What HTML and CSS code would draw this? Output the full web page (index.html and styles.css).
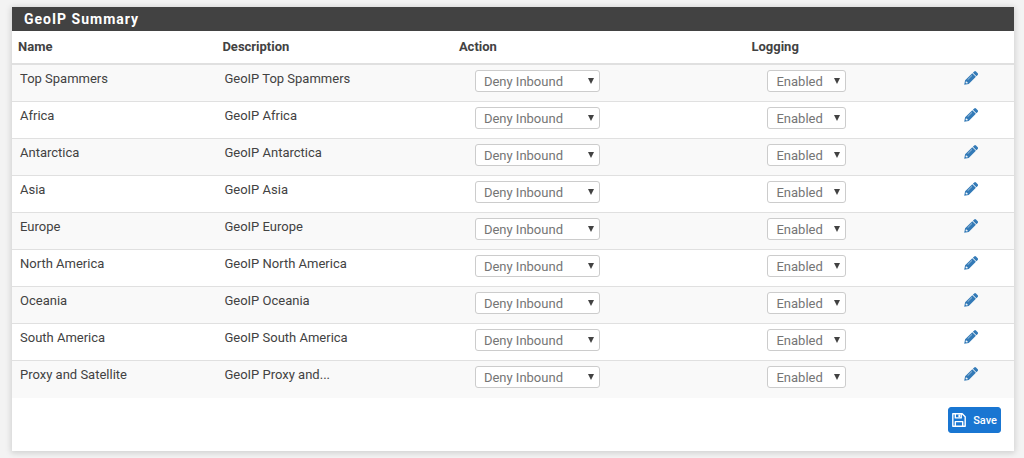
FILE: index.html
```
<!DOCTYPE html>
<html lang="en">
<head>
    <meta charset="UTF-8">
    <meta name="viewport" content="width=device-width, initial-scale=1.0">
    <title>GeoIP Summary</title>
    <link rel="stylesheet" href="styles.css">
</head>
<body>
    <svg class="sprite" aria-hidden="true">
        <symbol id="icon-pencil" viewBox="0 0 14 14">
            <path fill="currentColor" fill-rule="evenodd" d="M10.2 .5a1.3 1.3 0 0 1 1.8 0l1.7 1.7a1.3 1.3 0 0 1 0 1.8L12.4 5.2 8.9 1.7zM8.3 2.2l3.6 3.6-7.2 7.1L.2 13.8l.9-4.5zM1.9 10.4l-.4 1.2 1 1 1.2-.4v-.9h-.9v-.9zM7.9 4.2L3.6 8.4l.3.3 4.3-4.2z"/>
        </symbol>
        <symbol id="icon-save" viewBox="0 0 14 14">
            <path fill="none" stroke="currentColor" stroke-width="1.4" stroke-linejoin="round" d="M.8.8h9.4l3 3v9.4H.8zM3.3 13V8.6h7.4V13M3.3 1v3.9h5.9V1"/>
            <path fill="currentColor" d="M6.4 1.5h1.7v2.7H6.4z"/>
        </symbol>
    </svg>

    <form class="panel" onsubmit="return false">
        <h2 class="panel-title">GeoIP Summary</h2>
        <table>
            <thead>
                <tr>
                    <th class="col-name">Name</th>
                    <th class="col-description">Description</th>
                    <th class="col-action">Action</th>
                    <th class="col-logging">Logging</th>
                    <th class="col-edit"></th>
                </tr>
            </thead>
            <tbody id="geoipRows"></tbody>
        </table>
        <div class="panel-footer">
            <button type="submit" class="btn">
                <svg class="icon-save" aria-hidden="true"><use href="#icon-save"/></svg>
                Save
            </button>
        </div>
    </form>

    <script>
        const rows = [
            ['Top Spammers', 'GeoIP Top Spammers'],
            ['Africa', 'GeoIP Africa'],
            ['Antarctica', 'GeoIP Antarctica'],
            ['Asia', 'GeoIP Asia'],
            ['Europe', 'GeoIP Europe'],
            ['North America', 'GeoIP North America'],
            ['Oceania', 'GeoIP Oceania'],
            ['South America', 'GeoIP South America'],
            ['Proxy and Satellite', 'GeoIP Proxy and...']
        ];

        document.getElementById('geoipRows').innerHTML = rows.map(([name, description]) => `
            <tr>
                <td>${name}</td>
                <td>${description}</td>
                <td>
                    <div class="select select-action">
                        <select aria-label="${name} action">
                            <option>Disabled</option>
                            <option selected>Deny Inbound</option>
                            <option>Deny Outbound</option>
                            <option>Deny Both</option>
                        </select>
                    </div>
                </td>
                <td>
                    <div class="select select-logging">
                        <select aria-label="${name} logging">
                            <option selected>Enabled</option>
                            <option>Disabled</option>
                        </select>
                    </div>
                </td>
                <td>
                    <a href="#" aria-label="Edit ${name}"><svg class="icon-pencil" aria-hidden="true"><use href="#icon-pencil"/></svg></a>
                </td>
            </tr>
        `).join('');
    </script>
</body>
</html>
```

FILE: styles.css
```
* {
    box-sizing: border-box;
}

body {
    margin: 0;
    padding: 7px 10px 7px 12px;
    background: #f3f3f3;
    color: #424242;
    font-family: Roboto, "Liberation Sans", sans-serif;
    font-size: 13px;
    line-height: 18px;
}

.sprite {
    display: none;
}

.panel {
    background: #fff;
    box-shadow: 0 1px 6px 1px rgba(0, 0, 0, 0.15);
}

.panel-title {
    margin: 0;
    padding: 3px 12px;
    background: #424242;
    color: #fff;
    font-size: 14px;
    font-weight: 700;
    line-height: 18px;
    letter-spacing: 1px;
}

table {
    width: 100%;
    border-collapse: separate;
    border-spacing: 0;
    table-layout: fixed;
}

th {
    height: 34px;
    padding: 0 6px;
    border-bottom: 2px solid #e0e0e0;
    font-weight: 700;
    text-align: left;
}

.col-name {
    width: 20.4%;
}

.col-description {
    width: 23.6%;
}

.col-action {
    width: 29.2%;
}

.col-logging {
    width: 21%;
}

td {
    height: 37px;
    padding: 5px 8px 8px;
    border-bottom: 1px solid #e0e0e0;
    vertical-align: top;
}

tbody tr:nth-child(odd) {
    background: #f9f9f9;
}

tbody tr:last-child td {
    border-bottom: 0;
}

.select {
    position: relative;
    margin-left: 14px;
}

.select-action {
    width: 125px;
}

.select-logging {
    width: 79px;
}

.select::after {
    content: "";
    position: absolute;
    top: 8px;
    right: 6px;
    border: 3px solid transparent;
    border-top: 6px solid #424242;
    border-bottom: 0;
    pointer-events: none;
}

select {
    display: block;
    width: 100%;
    height: 22px;
    padding: 1px 8px 0;
    border: 1px solid #ccc;
    border-radius: 3px;
    background: #fff;
    color: #757575;
    font: inherit;
    appearance: none;
}

a {
    color: #337ab7;
}

.icon-pencil {
    display: block;
    width: 14px;
    height: 14px;
    margin-top: 1px;
}

.panel-footer {
    display: flex;
    justify-content: flex-end;
    padding: 9px 13px 18px;
}

.btn {
    display: flex;
    align-items: center;
    gap: 7px;
    height: 26px;
    padding: 0 3px;
    border: 1px solid #1976d2;
    border-radius: 3px;
    background: #1976d2;
    color: #fff;
    font: 500 11px Roboto, "Liberation Sans", sans-serif;
    cursor: pointer;
}

.icon-save {
    width: 14px;
    height: 14px;
}
```
